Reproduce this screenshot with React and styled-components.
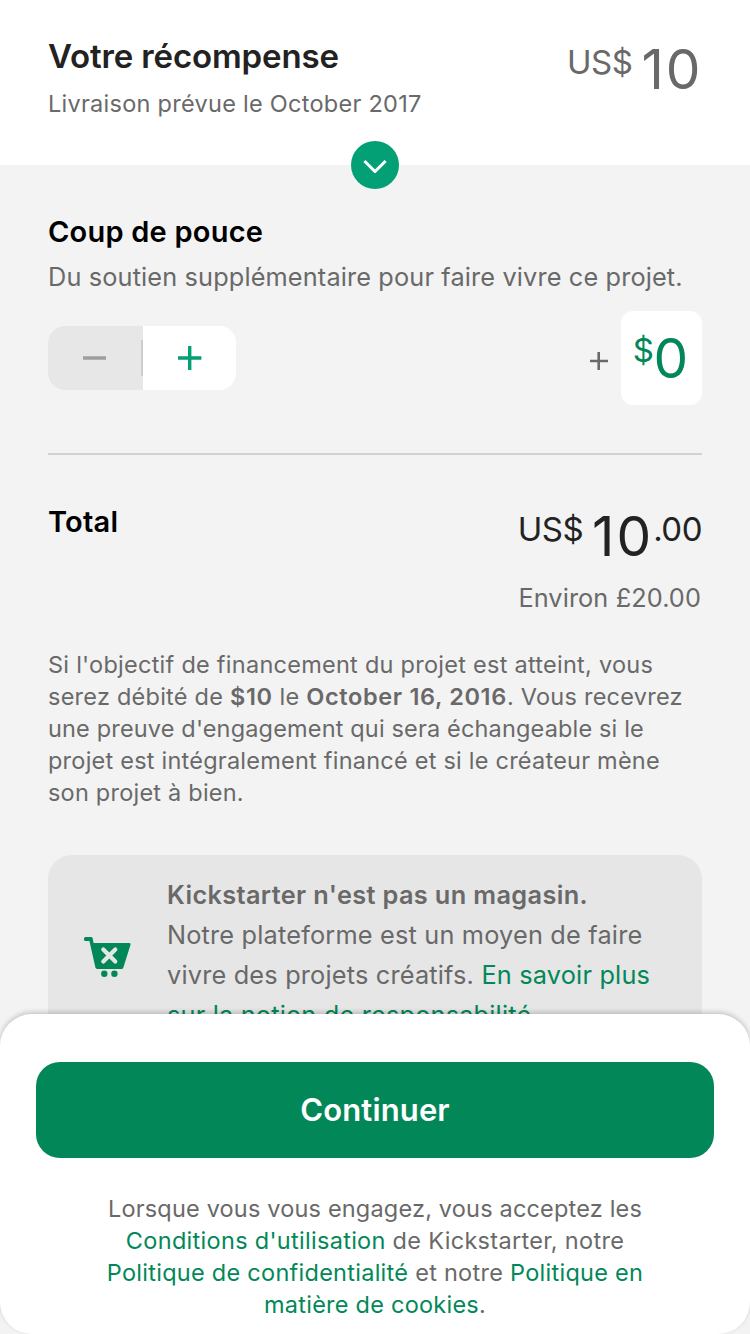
import React from "react";
import styled, { createGlobalStyle } from "styled-components";

const GlobalStyle = createGlobalStyle`
  *, *::before, *::after { box-sizing: border-box; }
  body {
    margin: 0;
    background: #f3f3f3;
    font-family: Inter, Roboto, "Liberation Sans", sans-serif;
    color: #696969;
    -webkit-font-smoothing: antialiased;
  }
  h1, h2, p { margin: 0; }
  button { font: inherit; border: 0; padding: 0; }
`;

const Screen = styled.main`
  position: relative;
  width: 750px;
  height: 1334px;
  overflow: hidden;
  background: #f3f3f3;
`;

const Header = styled.header`
  position: relative;
  display: flex;
  justify-content: space-between;
  height: 165px;
  padding: 36px 47.5px 0 48px;
  background: #fff;
`;

const HeaderTitle = styled.h1`
  margin-top: -1px;
  font-size: 33px;
  line-height: 42px;
  font-weight: 600;
  letter-spacing: -0.13px;
  color: #222;
`;

const Delivery = styled.p`
  margin-top: 12px;
  font-size: 23.5px;
  line-height: 30px;
  letter-spacing: 0.27px;
`;

const ExpandButton = styled.button`
  position: absolute;
  left: 351px;
  bottom: -24px;
  width: 48px;
  height: 48px;
  border-radius: 50%;
  background: #03a075;
  display: grid;
  place-items: center;
`;

const Money = styled.div`
  display: flex;
  align-items: flex-start;
  height: 66px;
  color: ${(p) => p.$color};
`;

const Whole = styled.span`
  font-size: 55px;
  line-height: 66px;
  letter-spacing: 2px;
`;

const Minor = styled.span`
  font-size: 33px;
  line-height: 40px;
  margin-top: ${(p) => p.$top || "6px"};
  margin-right: ${(p) => p.$gap || "0"};
  letter-spacing: -0.5px;
`;

const Content = styled.section`
  padding: 46px 48px 0;
`;

const SectionTitle = styled.h2`
  font-size: 29px;
  line-height: 40px;
  font-weight: 600;
  color: #000;
  letter-spacing: 0.22px;
`;

const BoostTitle = styled(SectionTitle)`
  padding-top: 1px;
`;

const Lead = styled.p`
  margin-top: 8px;
  font-size: 25.3px;
  line-height: 34px;
  letter-spacing: 0.14px;
  white-space: nowrap;
`;

const BonusRow = styled.div`
  display: flex;
  align-items: center;
  justify-content: space-between;
  height: 94px;
  margin-top: 17px;
`;

const Stepper = styled.div`
  display: flex;
  width: 188px;
  height: 64px;
  border-radius: 17px;
  overflow: hidden;
  background: #fff;
`;

const StepButton = styled.button`
  display: flex;
  align-items: center;
  justify-content: center;
  width: ${(p) => (p.$muted ? "95px" : "93px")};
  padding-right: ${(p) => (p.$muted ? "2px" : "0")};
  background: ${(p) => (p.$muted ? "#e7e7e7" : "#fff")};
`;

const StepDivider = styled.i`
  align-self: center;
  width: 2px;
  height: 36px;
  margin-left: -2px;
  background: #cdcdcd;
`;

const BonusAmount = styled.div`
  display: flex;
  align-items: center;
  gap: 13px;
`;

const PlusSign = styled.svg`
  width: 18px;
  height: 18px;
  margin-top: 5px;
`;

const AmountBox = styled.div`
  display: flex;
  justify-content: center;
  width: 81px;
  height: 94px;
  padding-top: 14px;
  border-radius: 12px;
  background: #fff;
`;

const Rule = styled.hr`
  height: 2px;
  margin: 48px 0 0;
  border: 0;
  background: #d1d1d1;
`;

const TotalRow = styled.div`
  display: flex;
  justify-content: space-between;
  margin-top: 47px;
`;

const TotalAmounts = styled.div`
  display: flex;
  flex-direction: column;
  align-items: flex-end;
  padding-top: 1px;
`;

const Approx = styled.p`
  margin-top: 12px;
  padding-right: 1px;
  font-size: 25.3px;
  line-height: 34px;
  letter-spacing: 0.1px;
`;

const Terms = styled.p`
  margin-top: 34px;
  font-size: 23.5px;
  line-height: 32px;
  white-space: nowrap;
  b { font-weight: 600; letter-spacing: 0.65px; }
`;

const Line = styled.span`
  display: block;
  letter-spacing: ${(p) => p.$track}px;
`;

const Notice = styled.aside`
  display: flex;
  height: 204px;
  margin-top: 46px;
  padding: 20px 0 0 36px;
  border-radius: 24px;
  background: #e6e6e6;
`;

const CartIcon = styled.svg`
  flex: none;
  width: 48px;
  height: 42px;
  margin: 62px 35px 0 0;
`;

const NoticeText = styled.p`
  font-size: 25.3px;
  line-height: 40px;
  letter-spacing: 0.19px;
  white-space: nowrap;
  b { font-weight: 600; letter-spacing: 0.37px; }
`;

const Link = styled.a`
  color: #028858;
`;

const Sheet = styled.footer`
  position: absolute;
  left: 0;
  right: 0;
  top: 1014px;
  height: 320px;
  padding: 48px 36px 0;
  border-radius: 32px;
  background: #fff;
  box-shadow: 0 -2px 5px rgba(0, 0, 0, 0.19);
`;

const ContinueButton = styled.button`
  display: block;
  width: 100%;
  height: 96px;
  border-radius: 24px;
  background: #028858;
  color: #fff;
  font-size: 31px;
  line-height: 96px;
  font-weight: 600;
  letter-spacing: 0.15px;
`;

const Legal = styled.p`
  margin-top: 35px;
  font-size: 23.5px;
  line-height: 32px;
  text-align: center;
  white-space: nowrap;
`;

export default function App() {
  return (
    <>
      <GlobalStyle />
      <Screen>
        <Header>
          <div>
            <HeaderTitle>Votre récompense</HeaderTitle>
            <Delivery>Livraison prévue le October 2017</Delivery>
          </div>
          <Money $color="#696969">
            <Minor $gap="9px">US$</Minor>
            <Whole>10</Whole>
          </Money>
          <ExpandButton aria-label="Développer">
            <svg width="24" height="16" viewBox="0 0 24 16" fill="none" stroke="#fff" strokeWidth="3">
              <path d="M1.4 4 12 14.5 22.6 4" />
            </svg>
          </ExpandButton>
        </Header>

        <Content>
          <BoostTitle>Coup de pouce</BoostTitle>
          <Lead>Du soutien supplémentaire pour faire vivre ce projet.</Lead>
          <BonusRow>
            <Stepper>
              <StepButton $muted aria-label="Moins">
                <svg width="24" height="24" viewBox="0 0 24 24" stroke="#9c9f9e" strokeWidth="3.4">
                  <path d="M0 12H23" />
                </svg>
              </StepButton>
              <StepDivider />
              <StepButton aria-label="Plus">
                <svg width="24" height="24" viewBox="0 0 24 24" stroke="#03a075" strokeWidth="3.4">
                  <path d="M0 12H23.4M11.7 0V24" />
                </svg>
              </StepButton>
            </Stepper>
            <BonusAmount>
              <PlusSign viewBox="0 0 18 18" stroke="#696969" strokeWidth="2.6">
                <path d="M0 9H18M8.7 0V18" />
              </PlusSign>
              <AmountBox>
                <Money $color="#028858">
                  <Minor $top="5px">$</Minor>
                  <Whole>0</Whole>
                </Money>
              </AmountBox>
            </BonusAmount>
          </BonusRow>
          <Rule />
          <TotalRow>
            <SectionTitle>Total</SectionTitle>
            <TotalAmounts>
              <Money $color="#222">
                <Minor $gap="9px">US$</Minor>
                <Whole>10</Whole>
                <Minor>.00</Minor>
              </Money>
              <Approx>Environ £20.00</Approx>
            </TotalAmounts>
          </TotalRow>
          <Terms>
            <Line $track={0.26}>Si l'objectif de financement du projet est atteint, vous</Line>
            <Line $track={0.24}>
              serez débité de <b>$10</b> le <b>October 16, 2016</b>. Vous recevrez
            </Line>
            <Line $track={0.16}>une preuve d'engagement qui sera échangeable si le</Line>
            <Line $track={0.23}>projet est intégralement financé et si le créateur mène</Line>
            <Line $track={0.22}>son projet à bien.</Line>
          </Terms>
          <Notice>
            <CartIcon viewBox="0 0 48 42">
              <path
                fill="#028858"
                d="M1.6 0H7Q8.4 0 8.7 1.4L9.6 6H45.2Q47 6 46.5 7.7L39.4 30.5Q38.9 32 37.4 32H13.2Q11.8 32 11.4 30.6L5.4 4H1.6Q0 4 0 2.4V1.6Q0 0 1.6 0Z"
              />
              <path d="M19.3 12.6 31.3 24.6M31.3 12.6 19.3 24.6" stroke="#e6e6e6" strokeWidth="4.2" strokeLinecap="round" />
              <circle cx="20.3" cy="36.8" r="3.2" fill="#028858" />
              <circle cx="30.4" cy="36.8" r="3.2" fill="#028858" />
            </CartIcon>
            <NoticeText>
              <b>Kickstarter n'est pas un magasin.</b><br />
              Notre plateforme est un moyen de faire<br />
              vivre des projets créatifs. <Link>En savoir plus<br />
              sur la notion de responsabilité.</Link>
            </NoticeText>
          </Notice>
        </Content>

        <Sheet>
          <ContinueButton>Continuer</ContinueButton>
          <Legal>
            <Line $track={0.18}>Lorsque vous vous engagez, vous acceptez les</Line>
            <Line $track={0.3}>
              <Link>Conditions d'utilisation</Link> de Kickstarter, notre
            </Line>
            <Line $track={0.27}>
              <Link>Politique de confidentialité</Link> et notre <Link>Politique en</Link>
            </Line>
            <Line $track={0.24}>
              <Link>matière de cookies</Link>.
            </Line>
          </Legal>
        </Sheet>
      </Screen>
    </>
  );
}
